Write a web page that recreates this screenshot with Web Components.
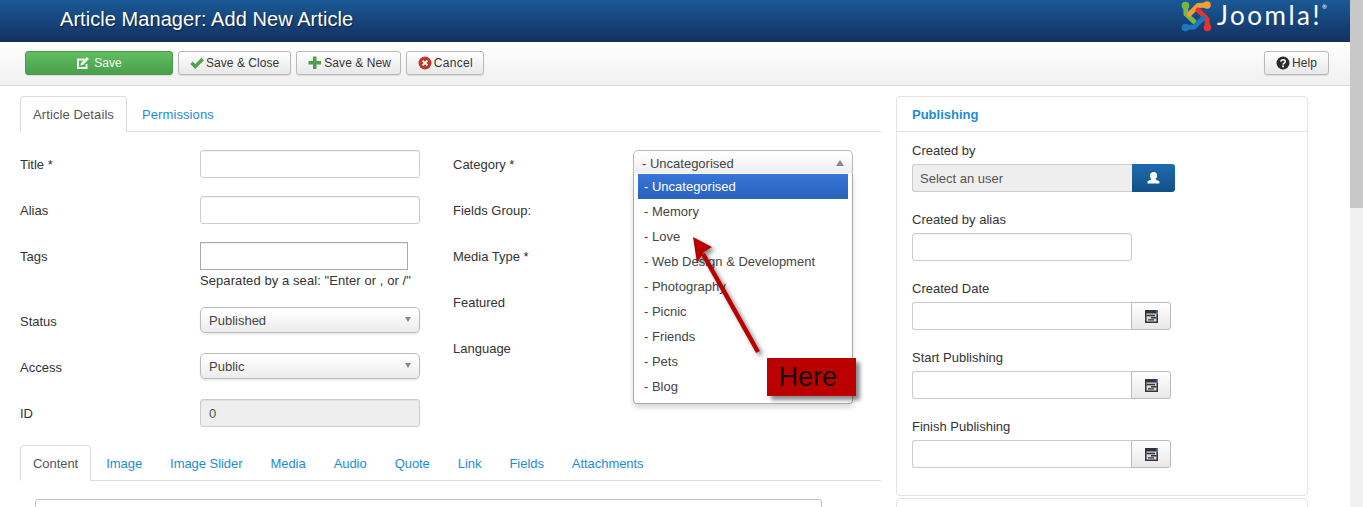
<!DOCTYPE html>
<html>
<head>
<meta charset="utf-8">
<title>Article Manager: Add New Article</title>
<style>
    html, body { margin: 0; height: 100%; overflow: hidden; background: #fff; }
    body { font: 13px/18px "Liberation Sans", Arial, sans-serif; color: #333; }
</style>
</head>
<body>
<jm-app>
    <jm-header title="Article Manager: Add New Article"></jm-header>
    <jm-toolbar>
        <jm-button variant="save" icon="edit" style="width:148px">Save</jm-button>
        <jm-button icon="check">Save &amp; Close</jm-button>
        <jm-button icon="plus" style="padding-right:9px">Save &amp; New</jm-button>
        <jm-button icon="cancel" style="padding-right:10px;letter-spacing:.3px">Cancel</jm-button>
        <jm-button slot="end" icon="help">Help</jm-button>
    </jm-toolbar>
    <jm-workspace>
        <jm-tabs style="letter-spacing:.1px" items="Article Details|Permissions"></jm-tabs>
        <jm-form>
            <jm-form-row label="Title *"><jm-input></jm-input></jm-form-row>
            <jm-form-row label="Alias"><jm-input></jm-input></jm-form-row>
            <jm-form-row label="Tags" hint="Separated by a seal: &quot;Enter or , or /&quot;"><jm-input square></jm-input></jm-form-row>
            <jm-form-row label="Status"><jm-select value="Published"></jm-select></jm-form-row>
            <jm-form-row label="Access"><jm-select value="Public"></jm-select></jm-form-row>
            <jm-form-row label="ID"><jm-input disabled value="0"></jm-input></jm-form-row>

            <jm-form-row slot="right" label="Category *">
                <jm-select open value="- Uncategorised" options="- Uncategorised|- Memory|- Love|- Web Design &amp; Development|- Photography|- Picnic|- Friends|- Pets|- Blog"></jm-select>
            </jm-form-row>
            <jm-form-row slot="right" label="Fields Group:"></jm-form-row>
            <jm-form-row slot="right" label="Media Type *"></jm-form-row>
            <jm-form-row slot="right" label="Featured"></jm-form-row>
            <jm-form-row slot="right" label="Language"></jm-form-row>
        </jm-form>
        <jm-tabs style="letter-spacing:-.05px" items="Content|Image|Image Slider|Media|Audio|Quote|Link|Fields|Attachments"></jm-tabs>
        <jm-editor></jm-editor>

        <jm-panel slot="side" title="Publishing">
            <jm-side-field label="Created by"><jm-user-picker></jm-user-picker></jm-side-field>
            <jm-side-field label="Created by alias"><jm-input></jm-input></jm-side-field>
            <jm-side-field label="Created Date"><jm-date></jm-date></jm-side-field>
            <jm-side-field label="Start Publishing"><jm-date></jm-date></jm-side-field>
            <jm-side-field label="Finish Publishing"><jm-date></jm-date></jm-side-field>
        </jm-panel>
        <jm-panel slot="side"></jm-panel>
    </jm-workspace>
    <jm-callout>Here</jm-callout>
</jm-app>

<script>
const icons = {
    edit: `<svg width="14" height="14" viewBox="0 0 14 14"><path d="M1 2.500h7.500v2H3v6.500h6.500V8h2v5H1z" fill="#eef7ee"/><path d="M5 6.900 10.800.9 13 3.100 7 9l-2.600.6z" fill="#eef7ee"/></svg>`,
    check: `<svg width="14" height="12" viewBox="0 0 14 12"><path d="M1.500 5.800 5.200 9.500 12.800 2" fill="none" stroke="#51a351" stroke-width="3.400"/></svg>`,
    plus: `<svg width="14" height="14" viewBox="0 0 14 14"><path d="M5 .5h3.500V5H13v3.500H8.500V13H5V8.500H.5V5H5z" fill="#4c9f4c"/></svg>`,
    cancel: `<svg width="14" height="14" viewBox="0 0 14 14"><circle cx="7" cy="7" r="6.500" fill="#bd362f"/><path d="M4.600 4.600l4.800 4.800M9.400 4.600 4.600 9.400" stroke="#fff" stroke-width="2"/></svg>`,
    help: `<svg width="14" height="14" viewBox="0 0 14 14"><circle cx="7" cy="7" r="6.500" fill="#2b2b2b"/><path d="M4.900 5.600c.2-2.500 4.400-2.400 4.300 0 0 1.600-2 1.500-2.100 3" fill="none" stroke="#fff" stroke-width="1.600"/><path d="M6.200 9.500H8v1.700H6.200z" fill="#fff"/></svg>`,
    user: `<svg width="14" height="14" viewBox="0 0 13 13"><path d="M6.500 1c1.800 0 2.900 1.300 2.900 3.100 0 1.300-.6 2.400-1.300 3v.8l3.400 1.600v2H.500v-2l3.400-1.600v-.8c-.7-.6-1.300-1.700-1.300-3C2.600 2.300 4.700 1 6.500 1z" fill="#fff"/></svg>`,
    calendar: `<svg width="13" height="13" viewBox="0 0 13 13"><path d="M0 0h13v13H0z" fill="#33343a"/><path d="M11.500 0H13v4h-1.500z" fill="#3f7fc0"/><path d="M1.500 3.500h10v8h-10z" fill="#d6d7dc"/><path d="M1.500 4.800h8.500v1.400H1.500zM6 7h5.500v1.400H6zM3 9.200h6v1.400H3z" fill="#33343a"/></svg>`
};

class JmApp extends HTMLElement {
    constructor() {
        super();
        this.attachShadow({mode: 'open'}).innerHTML = `
        <style>
            :host { display: flex; height: 507px; position: relative; overflow: hidden; }
            .page { width: 1350px; flex: none; }
            .scrollbar { flex: 1; background: #f1f1f1; }
            .thumb { height: 208px; background: #c8c8c8; }
        </style>
        <div class="page"><slot></slot></div>
        <div class="scrollbar"><div class="thumb"></div></div>`;
    }
}

class JmHeader extends HTMLElement {
    constructor() {
        super();
        this.attachShadow({mode: 'open'}).innerHTML = `
        <style>
            :host {
                display: flex; height: 42px; align-items: center; justify-content: space-between;
                padding: 0 24px 0 60px;
                background: linear-gradient(#1a5a96, #132f60);
            }
            h1 { margin: 0; font: 400 20px/24px "Liberation Sans", Arial, sans-serif; letter-spacing: .06px; color: #fff; text-shadow: 1px 1px 1px rgba(0,0,0,.5); padding-bottom: 5px; }
            .logo { display: flex; align-items: flex-start; height: 42px; }
            svg { display: block; margin: 1px 3px 0 0; }
            .name { width: 109px; padding-left: 2px; font: 400 26px/30px Lato, "Open Sans", sans-serif; color: #fff; letter-spacing: 2.500px; white-space: nowrap; }
            sup { font-size: 6px; line-height: 6px; letter-spacing: 0; vertical-align: 16px; }
        </style>
        <h1>${this.getAttribute('title')}</h1>
        <div class="logo">
            <svg width="31" height="31" viewBox="0 0 31 31" fill="none" stroke-width="5" stroke-linecap="round" stroke-linejoin="round">
                <path d="M4.500 4.500 5 13l8.500 8" stroke="#7ab742"/>
                <path d="M26 4l-9 .5L8.500 13" stroke="#f19e38"/>
                <path d="M26.500 26.500 26 18l-9-9" stroke="#e3342f"/>
                <path d="M4.500 26.500 13 26l9-8.500" stroke="#1c78bd"/>
                <circle cx="4.500" cy="4.500" r="3.800" fill="#7ab742"/>
                <circle cx="26" cy="4" r="3.800" fill="#f19e38"/>
                <circle cx="26.500" cy="26.500" r="3.800" fill="#e3342f"/>
                <circle cx="4.500" cy="26.500" r="3.800" fill="#1c78bd"/>
            </svg>
            <span class="name">Joomla!<sup>®</sup></span>
        </div>`;
    }
}

class JmToolbar extends HTMLElement {
    constructor() {
        super();
        this.attachShadow({mode: 'open'}).innerHTML = `
        <style>
            :host {
                display: flex; height: 44px; box-sizing: border-box; justify-content: space-between;
                padding: 9px 21px 0 25px;
                background: linear-gradient(#fff, #f0f0f0);
                border-bottom: 1px solid #dcdcdc;
            }
            div { display: flex; gap: 5px; }
        </style>
        <div><slot></slot></div>
        <div><slot name="end"></slot></div>`;
    }
}

class JmButton extends HTMLElement {
    constructor() {
        super();
        this.attachShadow({mode: 'open'}).innerHTML = `
        <style>
            :host {
                display: inline-flex; height: 24px; box-sizing: border-box; align-items: center; justify-content: center; gap: 2px;
                padding: 0 11px; font-size: 12px; letter-spacing: .05px; color: #333;
                border: 1px solid #b8b8b8; border-radius: 3px;
                background: linear-gradient(#fff, #e8e8e8);
                box-shadow: 0 1px 1px rgba(0,0,0,.1);
            }
            :host([variant="save"]) {
                color: #f4fbf4; border-color: #4a9a4a; background: linear-gradient(#62bd62, #49a049);
                gap: 4px; padding: 0;
            }
            svg { display: block; }
        </style>
        ${icons[this.getAttribute('icon')]}<slot></slot>`;
    }
}

class JmTabs extends HTMLElement {
    constructor() {
        super();
        const tabs = this.getAttribute('items').split('|').map((t, i) =>
            `<a class="${i == 0 ? 'active' : ''}">${t}</a>`).join('');
        this.attachShadow({mode: 'open'}).innerHTML = `
        <style>
            :host { display: flex; height: 36px; box-sizing: border-box; border-bottom: 1px solid #ddd; }
            a {
                display: block; box-sizing: border-box; height: 36px; line-height: 35px;
                padding: 0 12px; margin-right: 2px; border: 1px solid transparent; border-radius: 4px 4px 0 0;
                color: #1c8cd6;
            }
            a.active { color: #555; background: #fff; border-color: #ddd #ddd #fff; }
        </style>
        ${tabs}`;
    }
}

class JmForm extends HTMLElement {
    constructor() {
        super();
        this.attachShadow({mode: 'open'}).innerHTML = `
        <style>
            :host { display: grid; grid-template-columns: 433px 1fr; padding: 18px 0 0; }
            div { display: flex; flex-direction: column; }
        </style>
        <div><slot></slot></div>
        <div><slot name="right"></slot></div>`;
    }
}

class JmFormRow extends HTMLElement {
    constructor() {
        super();
        const hint = this.getAttribute('hint');
        this.attachShadow({mode: 'open'}).innerHTML = `
        <style>
            :host { display: grid; grid-template-columns: 180px 220px; min-height: 28px; margin-bottom: 18px; }
            label { line-height: 30px; height: 28px; }
            .hint { margin-top: 3px; line-height: 16px; white-space: nowrap; letter-spacing: .08px; }
        </style>
        <label>${this.getAttribute('label')}</label>
        <div><slot></slot>${hint ? `<div class="hint">${hint}</div>` : ''}</div>`;
    }
}

class JmInput extends HTMLElement {
    constructor() {
        super();
        this.attachShadow({mode: 'open'}).innerHTML = `
        <style>
            :host {
                display: block; height: 28px; box-sizing: border-box; padding: 0 8px; line-height: 28px;
                border: 1px solid #ccc; border-radius: 3px; background: #fff;
                box-shadow: inset 0 1px 1px rgba(0,0,0,.06);
            }
            :host([disabled]) { background: #eee; color: #555; }
            :host([square]) { width: 208px; border-color: #a9a9a9; border-radius: 0; }
        </style>
        ${this.getAttribute('value') || ''}`;
    }
}

class JmSelect extends HTMLElement {
    constructor() {
        super();
        const opts = this.getAttribute('options');
        const open = this.hasAttribute('open');
        const items = opts ? opts.split('|').map((o, i) =>
            `<li class="${i == 0 ? 'on' : ''}">${o}</li>`).join('') : '';
        this.attachShadow({mode: 'open'}).innerHTML = `
        <style>
            :host {
                display: block; position: relative; height: 26px; box-sizing: border-box; padding: 0 8px;
                line-height: 25px; color: #444;
                border: 1px solid #bbb; border-radius: 5px;
                background: linear-gradient(#fff 10%, #eee 90%);
                box-shadow: 0 2px 2px rgba(0,0,0,.08);
            }
            .caret { position: absolute; right: 8px; top: 9px; width: 0; height: 0; border: 3.5px solid transparent; border-top: 5px solid #888; border-bottom: 0; }
            :host([open]) .caret { border-width: 0 4.5px 6px; border-top: 0; border-bottom: 6px solid #888; }
            ul {
                position: absolute; left: -1px; right: -1px; top: 22px; z-index: 2; margin: 0; padding: 1px 4px 4px;
                list-style: none; background: #fff;
                border: 1px solid #aaa; border-top: 0; border-radius: 0 0 4px 4px;
                box-shadow: 0 4px 5px rgba(0,0,0,.15);
            }
            li { height: 25px; line-height: 25px; padding: 0 6px; color: #444; }
            li.on { color: #fff; background: linear-gradient(#3875d7, #2a62bc); }
        </style>
        ${this.getAttribute('value')}<span class="caret"></span>
        ${open ? `<ul>${items}</ul>` : ''}`;
    }
}

class JmEditor extends HTMLElement {
    constructor() {
        super();
        this.attachShadow({mode: 'open'}).innerHTML = `
        <style>
            :host { display: block; width: 787px; height: 60px; box-sizing: border-box; margin: 18px 0 0 15px; border: 1px solid #c4c4c4; border-radius: 3px 3px 0 0; }
        </style>`;
    }
}

class JmWorkspace extends HTMLElement {
    constructor() {
        super();
        this.attachShadow({mode: 'open'}).innerHTML = `
        <style>
            :host { display: grid; grid-template-columns: 861px 412px; column-gap: 15px; padding: 10px 0 0 20px; }
        </style>
        <div><slot></slot></div>
        <div><slot name="side"></slot></div>`;
    }
}

class JmPanel extends HTMLElement {
    constructor() {
        super();
        const title = this.getAttribute('title');
        this.attachShadow({mode: 'open'}).innerHTML = `
        <style>
            :host { display: block; box-sizing: border-box; min-height: 40px; margin-bottom: 2px; border: 1px solid #e3e3e3; border-radius: 4px; background: #fff; }
            h3 { margin: 0; height: 34px; padding: 0 15px; font: bold 13px/35px "Liberation Sans", Arial, sans-serif; color: #1c8cd6; border-bottom: 1px solid #e3e3e3; }
            .body { padding: 8px 15px 10px; }
        </style>
        ${title ? `<h3>${title}</h3><div class="body"><slot></slot></div>` : ''}`;
    }
}

class JmSideField extends HTMLElement {
    constructor() {
        super();
        this.attachShadow({mode: 'open'}).innerHTML = `
        <style>
            :host { display: block; width: 220px; margin-bottom: 17px; }
            label { display: block; height: 20px; line-height: 22px; margin-bottom: 4px; white-space: nowrap; }
        </style>
        <label>${this.getAttribute('label')}</label>
        <slot></slot>`;
    }
}

class JmUserPicker extends HTMLElement {
    constructor() {
        super();
        this.attachShadow({mode: 'open'}).innerHTML = `
        <style>
            :host { display: flex; width: 263px; height: 28px; }
            .field { width: 220px; box-sizing: border-box; padding: 0 7px; line-height: 28px; color: #555; background: #eee; border: 1px solid #ccc; border-right: 0; border-radius: 3px 0 0 3px; }
            .btn { flex: 1; display: flex; align-items: center; justify-content: center; background: linear-gradient(#1d6cb0, #124f87); border-radius: 0 3px 3px 0; }
        </style>
        <div class="field">Select an user</div>
        <div class="btn">${icons.user}</div>`;
    }
}

class JmDate extends HTMLElement {
    constructor() {
        super();
        this.attachShadow({mode: 'open'}).innerHTML = `
        <style>
            :host { display: flex; width: 259px; height: 28px; }
            .field { width: 219px; box-sizing: border-box; background: #fff; border: 1px solid #ccc; border-right: 0; border-radius: 3px 0 0 3px; }
            .btn { flex: 1; display: flex; align-items: center; justify-content: center; box-sizing: border-box; background: linear-gradient(#fff, #e8e8e8); border: 1px solid #bbb; border-radius: 0 3px 3px 0; }
        </style>
        <div class="field"></div>
        <div class="btn">${icons.calendar}</div>`;
    }
}

// The red note and arrow pasted over the screenshot
class JmCallout extends HTMLElement {
    constructor() {
        super();
        this.attachShadow({mode: 'open'}).innerHTML = `
        <style>
            :host { position: absolute; left: 0; top: 0; z-index: 5; }
            svg { position: absolute; left: 680px; top: 225px; filter: drop-shadow(3px 3px 2px rgba(0,0,0,.45)); }
            .note {
                position: absolute; left: 767px; top: 358px; width: 89px; height: 38px; box-sizing: border-box; padding-left: 11.5px;
                background: #bb0000; color: #111; font-size: 27px; line-height: 38px;
                box-shadow: 4px 4px 4px rgba(0,0,0,.45);
            }
        </style>
        <svg width="90" height="140" viewBox="680 225 90 140">
            <path d="M703 254 758 352" stroke="#b80000" stroke-width="4.500" fill="none"/>
            <path d="M693 237 712 247 704 252 697 263z" fill="#b80000"/>
        </svg>
        <div class="note"><slot></slot></div>`;
    }
}

window.customElements.define('jm-app', JmApp);
window.customElements.define('jm-header', JmHeader);
window.customElements.define('jm-toolbar', JmToolbar);
window.customElements.define('jm-button', JmButton);
window.customElements.define('jm-tabs', JmTabs);
window.customElements.define('jm-form', JmForm);
window.customElements.define('jm-form-row', JmFormRow);
window.customElements.define('jm-input', JmInput);
window.customElements.define('jm-select', JmSelect);
window.customElements.define('jm-editor', JmEditor);
window.customElements.define('jm-workspace', JmWorkspace);
window.customElements.define('jm-panel', JmPanel);
window.customElements.define('jm-side-field', JmSideField);
window.customElements.define('jm-user-picker', JmUserPicker);
window.customElements.define('jm-date', JmDate);
window.customElements.define('jm-callout', JmCallout);
</script>
</body>
</html>
